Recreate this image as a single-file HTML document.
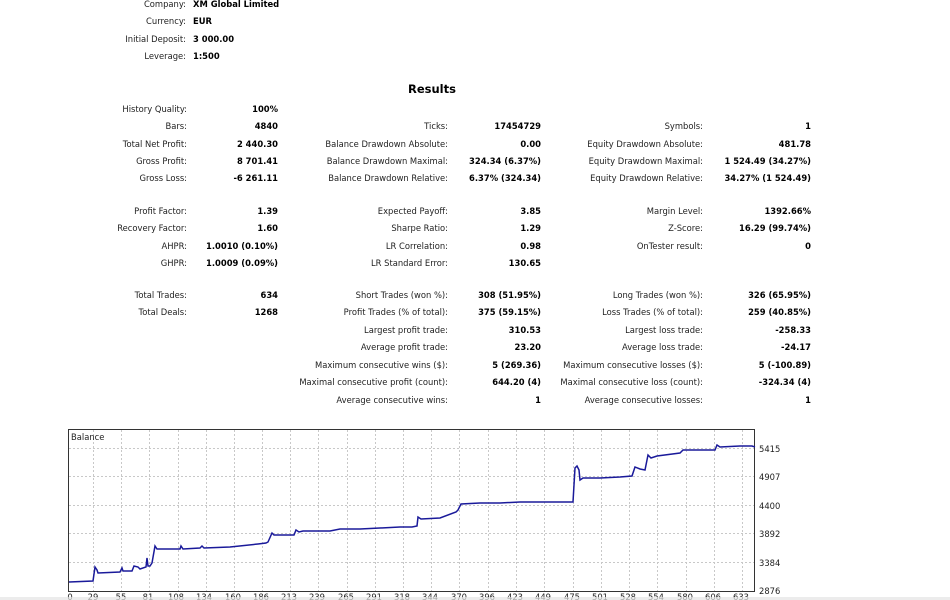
<!DOCTYPE html>
<html><head><meta charset="utf-8"><style>
html,body{margin:0;padding:0;background:#fff;width:950px;height:600px;overflow:hidden;position:relative;font-family:"DejaVu Sans","Liberation Sans",sans-serif;font-size:8.4px;color:#222}
.r{position:absolute;height:12px;line-height:12px;white-space:nowrap}
b{font-weight:bold;color:#000}
.l1{right:763px}.v1{right:672px}.l2{right:502px}.v2{right:409px}.l3{right:247px}.v3{right:139px}
.tl{right:764px}.tv{left:193px}
</style></head><body>
<div class="r tl" style="top:-2px">Company:</div><div class="r tv" style="top:-2px"><b>XM Global Limited</b></div>
<div class="r tl" style="top:15px">Currency:</div><div class="r tv" style="top:15px"><b>EUR</b></div>
<div class="r tl" style="top:33px">Initial Deposit:</div><div class="r tv" style="top:33px"><b>3 000.00</b></div>
<div class="r tl" style="top:50px">Leverage:</div><div class="r tv" style="top:50px"><b>1:500</b></div>
<div class="r" style="top:83px;left:408px;font-size:11.5px;font-weight:bold;color:#000">Results</div>

<div class="r l1" style="top:103px">History Quality:</div><div class="r v1" style="top:103px"><b>100%</b></div>

<div class="r l1" style="top:120px">Bars:</div><div class="r v1" style="top:120px"><b>4840</b></div>
<div class="r l2" style="top:120px">Ticks:</div><div class="r v2" style="top:120px"><b>17454729</b></div>
<div class="r l3" style="top:120px">Symbols:</div><div class="r v3" style="top:120px"><b>1</b></div>

<div class="r l1" style="top:138px">Total Net Profit:</div><div class="r v1" style="top:138px"><b>2 440.30</b></div>
<div class="r l2" style="top:138px">Balance Drawdown Absolute:</div><div class="r v2" style="top:138px"><b>0.00</b></div>
<div class="r l3" style="top:138px">Equity Drawdown Absolute:</div><div class="r v3" style="top:138px"><b>481.78</b></div>

<div class="r l1" style="top:155px">Gross Profit:</div><div class="r v1" style="top:155px"><b>8 701.41</b></div>
<div class="r l2" style="top:155px">Balance Drawdown Maximal:</div><div class="r v2" style="top:155px"><b>324.34 (6.37%)</b></div>
<div class="r l3" style="top:155px">Equity Drawdown Maximal:</div><div class="r v3" style="top:155px"><b>1 524.49 (34.27%)</b></div>

<div class="r l1" style="top:172px">Gross Loss:</div><div class="r v1" style="top:172px"><b>-6 261.11</b></div>
<div class="r l2" style="top:172px">Balance Drawdown Relative:</div><div class="r v2" style="top:172px"><b>6.37% (324.34)</b></div>
<div class="r l3" style="top:172px">Equity Drawdown Relative:</div><div class="r v3" style="top:172px"><b>34.27% (1 524.49)</b></div>

<div class="r l1" style="top:205px">Profit Factor:</div><div class="r v1" style="top:205px"><b>1.39</b></div>
<div class="r l2" style="top:205px">Expected Payoff:</div><div class="r v2" style="top:205px"><b>3.85</b></div>
<div class="r l3" style="top:205px">Margin Level:</div><div class="r v3" style="top:205px"><b>1392.66%</b></div>

<div class="r l1" style="top:222px">Recovery Factor:</div><div class="r v1" style="top:222px"><b>1.60</b></div>
<div class="r l2" style="top:222px">Sharpe Ratio:</div><div class="r v2" style="top:222px"><b>1.29</b></div>
<div class="r l3" style="top:222px">Z-Score:</div><div class="r v3" style="top:222px"><b>16.29 (99.74%)</b></div>

<div class="r l1" style="top:240px">AHPR:</div><div class="r v1" style="top:240px"><b>1.0010 (0.10%)</b></div>
<div class="r l2" style="top:240px">LR Correlation:</div><div class="r v2" style="top:240px"><b>0.98</b></div>
<div class="r l3" style="top:240px">OnTester result:</div><div class="r v3" style="top:240px"><b>0</b></div>

<div class="r l1" style="top:257px">GHPR:</div><div class="r v1" style="top:257px"><b>1.0009 (0.09%)</b></div>
<div class="r l2" style="top:257px">LR Standard Error:</div><div class="r v2" style="top:257px"><b>130.65</b></div>

<div class="r l1" style="top:289px">Total Trades:</div><div class="r v1" style="top:289px"><b>634</b></div>
<div class="r l2" style="top:289px">Short Trades (won %):</div><div class="r v2" style="top:289px"><b>308 (51.95%)</b></div>
<div class="r l3" style="top:289px">Long Trades (won %):</div><div class="r v3" style="top:289px"><b>326 (65.95%)</b></div>

<div class="r l1" style="top:306px">Total Deals:</div><div class="r v1" style="top:306px"><b>1268</b></div>
<div class="r l2" style="top:306px">Profit Trades (% of total):</div><div class="r v2" style="top:306px"><b>375 (59.15%)</b></div>
<div class="r l3" style="top:306px">Loss Trades (% of total):</div><div class="r v3" style="top:306px"><b>259 (40.85%)</b></div>

<div class="r l2" style="top:324px">Largest profit trade:</div><div class="r v2" style="top:324px"><b>310.53</b></div>
<div class="r l3" style="top:324px">Largest loss trade:</div><div class="r v3" style="top:324px"><b>-258.33</b></div>

<div class="r l2" style="top:341px">Average profit trade:</div><div class="r v2" style="top:341px"><b>23.20</b></div>
<div class="r l3" style="top:341px">Average loss trade:</div><div class="r v3" style="top:341px"><b>-24.17</b></div>

<div class="r l2" style="top:359px">Maximum consecutive wins ($):</div><div class="r v2" style="top:359px"><b>5 (269.36)</b></div>
<div class="r l3" style="top:359px">Maximum consecutive losses ($):</div><div class="r v3" style="top:359px"><b>5 (-100.89)</b></div>

<div class="r l2" style="top:376px">Maximal consecutive profit (count):</div><div class="r v2" style="top:376px"><b>644.20 (4)</b></div>
<div class="r l3" style="top:376px">Maximal consecutive loss (count):</div><div class="r v3" style="top:376px"><b>-324.34 (4)</b></div>

<div class="r l2" style="top:394px">Average consecutive wins:</div><div class="r v2" style="top:394px"><b>1</b></div>
<div class="r l3" style="top:394px">Average consecutive losses:</div><div class="r v3" style="top:394px"><b>1</b></div>

<svg style="position:absolute;left:0;top:0" width="950" height="600">
<g stroke="#c8c8c8" stroke-dasharray="2,2" stroke-width="1">
<line x1="69" y1="448.5" x2="755" y2="448.5"/><line x1="69" y1="476.5" x2="755" y2="476.5"/><line x1="69" y1="505.5" x2="755" y2="505.5"/><line x1="69" y1="533.5" x2="755" y2="533.5"/><line x1="69" y1="562.5" x2="755" y2="562.5"/>
<line x1="93.5" y1="430" x2="93.5" y2="591"/><line x1="121.5" y1="430" x2="121.5" y2="591"/><line x1="149.5" y1="430" x2="149.5" y2="591"/><line x1="178.5" y1="430" x2="178.5" y2="591"/><line x1="206.5" y1="430" x2="206.5" y2="591"/><line x1="234.5" y1="430" x2="234.5" y2="591"/><line x1="262.5" y1="430" x2="262.5" y2="591"/><line x1="290.5" y1="430" x2="290.5" y2="591"/><line x1="318.5" y1="430" x2="318.5" y2="591"/><line x1="347.5" y1="430" x2="347.5" y2="591"/><line x1="375.5" y1="430" x2="375.5" y2="591"/><line x1="403.5" y1="430" x2="403.5" y2="591"/><line x1="431.5" y1="430" x2="431.5" y2="591"/><line x1="459.5" y1="430" x2="459.5" y2="591"/><line x1="488.5" y1="430" x2="488.5" y2="591"/><line x1="516.5" y1="430" x2="516.5" y2="591"/><line x1="544.5" y1="430" x2="544.5" y2="591"/><line x1="573.5" y1="430" x2="573.5" y2="591"/><line x1="601.5" y1="430" x2="601.5" y2="591"/><line x1="629.5" y1="430" x2="629.5" y2="591"/><line x1="657.5" y1="430" x2="657.5" y2="591"/><line x1="686.5" y1="430" x2="686.5" y2="591"/><line x1="714.5" y1="430" x2="714.5" y2="591"/><line x1="742.5" y1="430" x2="742.5" y2="591"/>
</g>
<rect x="68.5" y="429.5" width="686" height="162" fill="none" stroke="#333" stroke-width="1"/>
<polyline fill="none" stroke="#1a1a9a" stroke-width="1.5" points="69,582 93,581 95,567 97,570 98,573 120,572 122,568 123,571 132,571 134,566 138,567 140,569 146,567 147,558 148,566 150,566 152,563 155,546 157,549 180,549 181,546 183,549 200,548 202,546 204,548 230,547 258,544 266,543 268,542 272,533 274,535 294,535 296,530 299,532 303,531 330,531 340,529 360,529 380,528 400,527 412,527 417,526 418,517 421,519 440,518 456,512 458,510 461,504 480,503 500,503 520,502 560,502 573,502 575,468 577,466 579,470 580,480 583,478 600,478 620,477 632,476 635,467 640,469 645,470 648,455 651,458 657,456 680,453 683,450 700,450 715,450 717,445 720,447 740,446 752,446 755,447"/>
<g font-family="DejaVu Sans, Liberation Sans, sans-serif" font-size="8.4" fill="#222">
<text x="71" y="440">Balance</text>
<text x="759" y="452">5415</text><text x="759" y="480">4907</text><text x="759" y="509">4400</text><text x="759" y="537">3892</text><text x="759" y="566">3384</text><text x="759" y="594">2876</text>
<g text-anchor="middle">
<text x="70" y="600">0</text><text x="93" y="600">29</text><text x="121" y="600">55</text><text x="148" y="600">81</text><text x="176" y="600">108</text><text x="204" y="600">134</text><text x="233" y="600">160</text><text x="261" y="600">186</text><text x="289" y="600">213</text><text x="317" y="600">239</text><text x="346" y="600">265</text><text x="374" y="600">291</text><text x="402" y="600">318</text><text x="430" y="600">344</text><text x="459" y="600">370</text><text x="487" y="600">396</text><text x="515" y="600">423</text><text x="543" y="600">449</text><text x="572" y="600">475</text><text x="600" y="600">501</text><text x="628" y="600">528</text><text x="656" y="600">554</text><text x="685" y="600">580</text><text x="713" y="600">606</text><text x="741" y="600">633</text>
</g></g>
<rect x="0" y="597" width="950" height="3" fill="#e4e4e4" opacity="0.7"/>
</svg>
</body></html>
